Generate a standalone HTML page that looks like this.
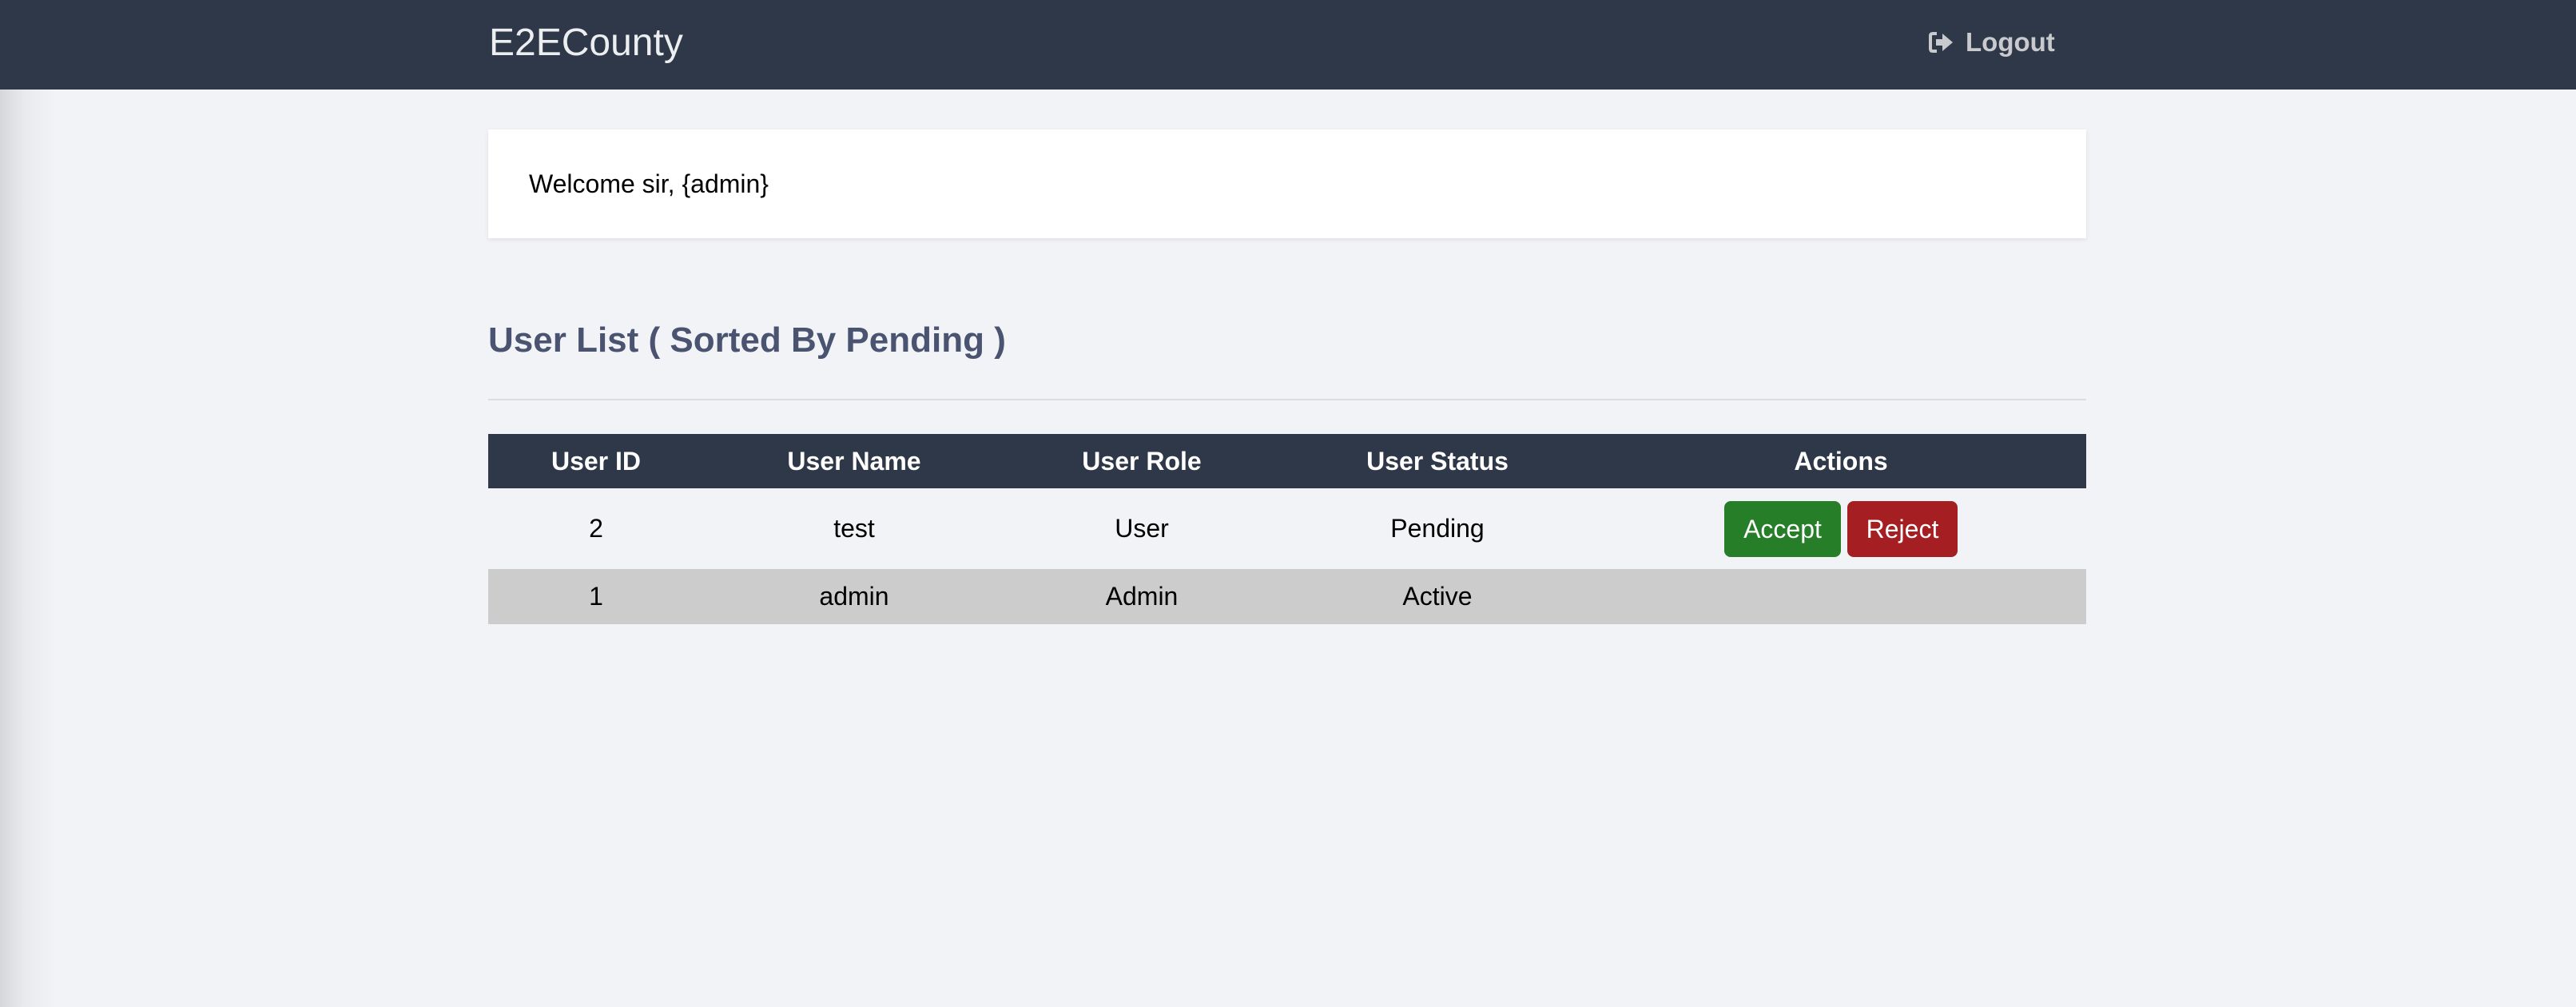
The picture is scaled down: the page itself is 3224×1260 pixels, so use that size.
<!DOCTYPE html>
<html><head><meta charset="utf-8"><style>
html,body{margin:0;padding:0}
body{width:3224px;height:1260px;overflow:hidden;background:#f2f3f7;font-family:"Liberation Sans",Arial,sans-serif;position:relative}
.shade{position:absolute;left:0;top:112px;width:70px;height:1148px;background:linear-gradient(to right,#d6d7db,#e9eaee 30px,#f2f3f7 70px)}
.hdr{position:absolute;left:0;top:0;width:3224px;height:112px;background:#2f3848}
.brand{position:absolute;left:612px;top:24px;font-size:48px;color:#eceef0;line-height:60px}
.logout{position:absolute;left:2414px;top:30px;font-size:33px;font-weight:bold;color:#c8cacd;line-height:46px;display:flex;align-items:center}
.logout svg{margin-right:14px}
.card{position:absolute;left:611px;top:162px;width:2000px;height:136px;background:#fff;box-shadow:0 2px 6px rgba(0,0,0,0.08)}
.card span{position:absolute;left:51px;top:48px;font-size:32px;color:#000;line-height:40px}
h2{position:absolute;left:611px;top:398px;margin:0;font-size:44px;font-weight:bold;color:#4a5470;line-height:56px}
.hr{position:absolute;left:611px;top:499px;width:2000px;height:2px;background:#dcdde1}
table{position:absolute;left:611px;top:543px;width:2000px;border-collapse:collapse;font-size:32px;table-layout:fixed}
th{background:#2f3848;color:#fff;height:68px;padding:0;font-weight:bold}
td{text-align:center;padding:0;color:#000}
tr.r1 td{height:101px}
tr.r2 td{height:69px;background:#cccccc}
.btn{display:inline-block;color:#fff;border-radius:8px;height:70px;line-height:70px;font-size:32px;vertical-align:middle}
.acc{background:#267f28;width:146px}
.rej{background:#a51e22;width:138px;margin-left:8px}
</style></head><body>
<div class="hdr">
<div class="brand">E2ECounty</div>
<div class="logout"><svg width="32" height="28" viewBox="0 0 32 28"><path d="M10 3H5Q2 3 2 6V22Q2 25 5 25H10" fill="none" stroke="#c8cacd" stroke-width="4"/><path d="M9 10H17V3L30 14L17 25V18H9Z" fill="#c8cacd"/></svg>Logout</div>
</div>
<div class="shade"></div>
<div class="card"><span>Welcome sir, {admin}</span></div>
<h2>User List ( Sorted By Pending )</h2>
<div class="hr"></div>
<table>
<colgroup><col style="width:270px"><col style="width:376px"><col style="width:344px"><col style="width:396px"><col style="width:614px"></colgroup>
<tr><th>User ID</th><th>User Name</th><th>User Role</th><th>User Status</th><th>Actions</th></tr>
<tr class="r1"><td>2</td><td>test</td><td>User</td><td>Pending</td><td><span class="btn acc">Accept</span><span class="btn rej">Reject</span></td></tr>
<tr class="r2"><td>1</td><td>admin</td><td>Admin</td><td>Active</td><td></td></tr>
</table>
</body></html>
